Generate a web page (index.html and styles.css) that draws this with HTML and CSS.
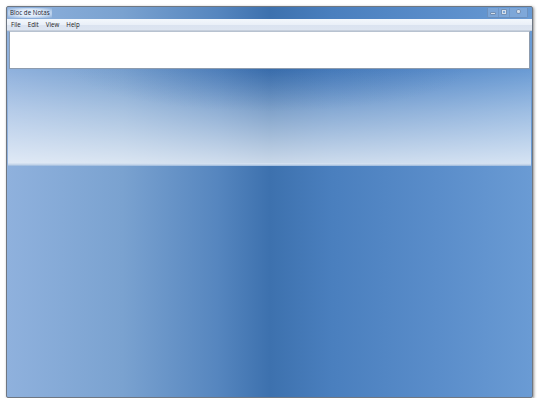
FILE: index.html
```html
<!DOCTYPE html>
<html>
<head>
<meta charset="utf-8">
<link rel="stylesheet" href="styles.css">
</head>
<body>
<div class="window">
  <div class="titlebar">
    <span class="title">Bloc de Notas</span>
    <div class="controls">
      <span class="btn min"></span>
      <span class="btn max"></span>
      <span class="btn close"></span>
    </div>
  </div>
  <div class="menubar">
    <span class="menu">File</span>
    <span class="menu">Edit</span>
    <span class="menu">View</span>
    <span class="menu">Help</span>
  </div>
  <div class="client">
    <div class="editor"></div>
    <div class="glass"></div>
    <div class="divider"></div>
    <div class="lower"></div>
  </div>
</div>
</body>
</html>
```

FILE: styles.css
```css
html, body {
  margin: 0;
  padding: 0;
  background: #ffffff;
}

body {
  font-family: "Open Sans", "DejaVu Sans", sans-serif;
}

.window {
  margin: 6px 0 0 6px;
  width: 525px;
  height: 390px;
  border: 1px solid #6f7782;
  border-radius: 2px;
  box-shadow: 1px 1px 3px rgba(0, 0, 0, 0.45);
  display: flex;
  flex-direction: column;
  background: linear-gradient(to right, #8fb1dd 0%, #7aa2d0 22%, #5686bf 40%, #3d71ae 50%, #4a7fbe 62%, #5a8dca 82%, #6a9bd4 100%);
  overflow: hidden;
}

.titlebar {
  height: 12px;
  display: flex;
  align-items: center;
  justify-content: space-between;
  padding: 0 4px 0 1px;
}

.title {
  font-size: 6.2px;
  color: #1a2230;
  padding: 0 2px;
  line-height: 10px;
  background: radial-gradient(ellipse at center, rgba(230, 240, 252, 0.95) 45%, rgba(210, 225, 245, 0) 100%);
}

.controls {
  display: flex;
  height: 9px;
  margin-top: -1px;
  border: 1px solid rgba(90, 120, 160, 0.45);
  border-top: none;
  border-radius: 0 0 2px 2px;
  background: rgba(170, 195, 228, 0.35);
}

.btn {
  position: relative;
  width: 10px;
  height: 9px;
  border-right: 1px solid rgba(90, 120, 160, 0.3);
}

.btn.close {
  width: 17px;
  border-right: none;
}

.btn.min::after {
  content: "";
  position: absolute;
  left: 3px;
  top: 5px;
  width: 4px;
  height: 1px;
  background: #d4deea;
  box-shadow: 0 0 0 0.5px #6a7a90;
}

.btn.max::after {
  content: "";
  position: absolute;
  left: 3px;
  top: 2px;
  width: 2px;
  height: 2px;
  border: 1px solid #d4deea;
  box-shadow: 0 0 0 0.5px #6a7a90;
}

.btn.close::after {
  content: "";
  position: absolute;
  left: 7px;
  top: 2px;
  width: 3px;
  height: 3px;
  background: #d4deea;
  border-radius: 1px;
  box-shadow: 0 0 0 0.5px #6a7a90;
}

.menubar {
  height: 11px;
  display: flex;
  align-items: center;
  padding-left: 2px;
  background: linear-gradient(to bottom, #f3f7fc 0%, #eaf0f8 50%, #dbe3f0 55%, #dde5f1 100%);
  border-bottom: 1px solid #c6cfdc;
}

.menu {
  font-size: 6.2px;
  color: #1b1b1b;
  padding: 0 2px;
  margin-right: 3px;
  line-height: 11px;
}

.client {
  flex: 1;
  display: flex;
  flex-direction: column;
  padding: 0 1px 1px 1px;
}

.editor {
  height: 36px;
  margin: 0 1px;
  background: #ffffff;
  border: 1px solid #8d9bad;
  border-top-color: #b7c2d0;
}

.glass {
  height: 94px;
  background:
    radial-gradient(ellipse 38% 45% at 50% 0%, rgba(40, 90, 160, 0.22) 0%, rgba(40, 90, 160, 0) 100%),
    linear-gradient(to bottom, rgba(255, 255, 255, 0) 0%, rgba(255, 255, 255, 0.35) 45%, rgba(255, 255, 255, 0.72) 100%);
}

.divider {
  height: 3px;
  background: linear-gradient(to bottom, #dbe6f3 0%, #c4d5ea 50%, #9ab8dc 100%);
}

.lower {
  flex: 1;
}
```
